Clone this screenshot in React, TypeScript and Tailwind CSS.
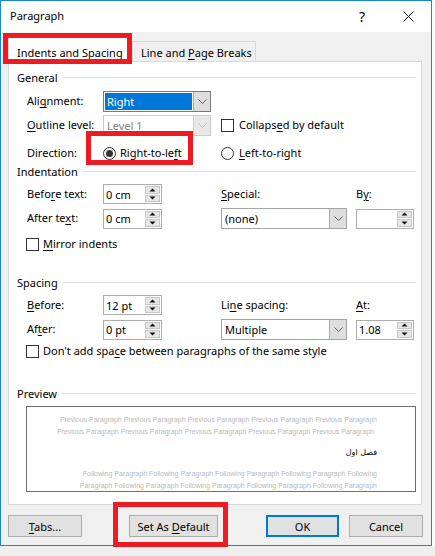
import React from "react";

const U = ({ children }: { children: React.ReactNode }) => (
  <span className="underline decoration-1 underline-offset-2">{children}</span>
);

const Chevron = ({ color = "#5f5f5f" }: { color?: string }) => (
  <svg width="9" height="5" viewBox="0 0 9 5">
    <path d="M0.5 0.5 L4.5 4.5 L8.5 0.5" fill="none" stroke={color} strokeWidth="1" />
  </svg>
);

const Heading = ({ children }: { children: React.ReactNode }) => (
  <div className="flex h-[14px] items-center gap-[5px]">
    <span className="leading-none">{children}</span>
    <div className="h-px flex-1 bg-[#dcdcdc]" />
  </div>
);

const Checkbox = () => <div className="h-[13px] w-[13px] shrink-0 border border-[#333333] bg-white" />;

const Radio = ({ checked }: { checked?: boolean }) => (
  <svg width="13" height="13" viewBox="0 0 13 13" className="shrink-0">
    <circle cx="6.5" cy="6.5" r="6" fill="white" stroke="#333333" strokeWidth="1" />
    {checked && <circle cx="6.5" cy="6.5" r="3.5" fill="#333333" />}
  </svg>
);

const Arrow = ({ up }: { up?: boolean }) => (
  <svg width="7" height="4" viewBox="0 0 7 4">
    <path d={up ? "M0.5 3.5 L3.5 0.5 L6.5 3.5 Z" : "M0.5 0.5 L3.5 3.5 L6.5 0.5 Z"} fill="#111111" />
  </svg>
);

const Spinner = ({ value, width = "w-[59px]" }: { value: string; width?: string }) => (
  <div className={`flex h-[20px] ${width} border border-[#adadad] bg-white`}>
    <div className="flex flex-1 items-center pl-[2px] leading-none">{value}</div>
    <div className="my-[1px] mr-[1px] flex w-[15px] flex-col gap-[1px]">
      <div className="flex flex-1 items-center justify-center border border-[#c7c7c7] bg-[#e6e6e6]">
        <Arrow up />
      </div>
      <div className="flex flex-1 items-center justify-center border border-[#c7c7c7] bg-[#e6e6e6]">
        <Arrow />
      </div>
    </div>
  </div>
);

const Select = ({ value, width }: { value: string; width: string }) => (
  <div className={`flex h-[21px] ${width} border border-[#a5a5a5] bg-white`}>
    <div className="flex flex-1 items-center pl-[3px] leading-none">{value}</div>
    <div className="flex w-[17px] items-center justify-center border-l border-[#acacac] bg-[#dedede]">
      <Chevron />
    </div>
  </div>
);

const Button = ({ children, width, primary }: { children: React.ReactNode; width: string; primary?: boolean }) => (
  <div
    className={`flex h-[22px] ${width} items-center justify-center bg-[#e1e1e1] leading-none ${
      primary ? "border-2 border-[#0078d7]" : "border border-[#adadad]"
    }`}
  >
    {children}
  </div>
);

const grid = "ml-[10px] grid grid-cols-[76px_118px_135px_58px] items-center";

function Panel() {
  return (
    <div className="relative z-0 -mt-px flex w-[414px] flex-col border border-[#d9d9d9] bg-white pb-[12px] pl-[8px] pr-[5px] pt-[8px]">
      <Heading>General</Heading>

      <div className={`${grid} mt-[7px] h-[21px]`}>
        <span>
          Ali<U>g</U>nment:
        </span>
        <div className="flex h-[21px] w-[108px] border border-[#7a7a7a] bg-white">
          <div className="m-[1px] flex flex-1 items-center bg-[#0078d7] pl-[2px] leading-none text-white">Right</div>
          <div className="flex w-[17px] items-center justify-center border-l border-[#acacac] bg-[#dedede]">
            <Chevron />
          </div>
        </div>
        <div />
        <div />
      </div>

      <div className={`${grid} mt-[3px] h-[21px]`}>
        <span>
          <U>O</U>utline level:
        </span>
        <div className="flex h-[21px] w-[108px] border border-[#cccccc] bg-white">
          <div className="flex flex-1 items-center pl-[3px] leading-none text-[#838383]">Level 1</div>
          <div className="flex w-[17px] items-center justify-center border-l border-[#cccccc] bg-[#e8e8e8]">
            <Chevron color="#bdbdbd" />
          </div>
        </div>
        <div className="col-span-2 flex items-center gap-[5px]">
          <Checkbox />
          <span>
            Collaps<U>e</U>d by default
          </span>
        </div>
      </div>

      <div className={`${grid} mt-[7px] h-[20px]`}>
        <span>Direction:</span>
        <div className="flex items-center gap-[4px]">
          <Radio checked />
          <span>
            Right-to-le<U>f</U>t
          </span>
        </div>
        <div className="col-span-2 flex items-center gap-[5px]">
          <Radio />
          <span>
            <U>L</U>eft-to-right
          </span>
        </div>
      </div>

      <div className="mt-[1px]">
        <Heading>Indentation</Heading>
      </div>

      <div className={`${grid} mt-[6px] h-[20px]`}>
        <span>
          Befo<U>r</U>e text:
        </span>
        <Spinner value="0 cm" />
        <span>
          <U>S</U>pecial:
        </span>
        <span>
          B<U>y</U>:
        </span>
      </div>

      <div className={`${grid} mt-[4px] h-[21px]`}>
        <span>
          After te<U>x</U>t:
        </span>
        <Spinner value="0 cm" />
        <Select value="(none)" width="w-[126px]" />
        <Spinner value="" width="w-[58px]" />
      </div>

      <div className="ml-[9px] mt-[8px] flex h-[14px] items-center gap-[4px]">
        <Checkbox />
        <span>
          <U>M</U>irror indents
        </span>
      </div>

      <div className="mt-[24px]">
        <Heading>Spacing</Heading>
      </div>

      <div className={`${grid} mt-[6px] h-[20px]`}>
        <span>
          <U>B</U>efore:
        </span>
        <Spinner value="12 pt" />
        <span>
          Li<U>n</U>e spacing:
        </span>
        <span>
          <U>A</U>t:
        </span>
      </div>

      <div className={`${grid} mt-[4px] h-[21px]`}>
        <span>
          Af<U>t</U>er:
        </span>
        <Spinner value="0 pt" />
        <Select value="Multiple" width="w-[126px]" />
        <Spinner value="1.08" width="w-[58px]" />
      </div>

      <div className="ml-[9px] mt-[4px] flex h-[14px] items-center gap-[4px]">
        <Checkbox />
        <span>
          Don't add spa<U>c</U>e between paragraphs of the same style
        </span>
      </div>

      <div className="mt-[28px]">
        <Heading>Preview</Heading>
      </div>

      <div className="ml-[9px] mt-[6px] h-[86px] overflow-hidden border border-[#6d6d6d] bg-white pr-[38px] pt-[7px] text-right font-['Liberation_Sans',Arial,sans-serif] text-[7px] leading-[12px] text-[#b9b9b9]">
        <div>Previous Paragraph Previous Paragraph Previous Paragraph Previous Paragraph Previous Paragraph</div>
        <div className="pr-[3px]">Previous Paragraph Previous Paragraph Previous Paragraph Previous Paragraph Previous Paragraph</div>
        <div className="mt-[9px] font-['DejaVu_Sans',sans-serif] text-[8px] text-black" dir="rtl">
          فصل اول
        </div>
        <div className="mt-[9px]">Following Paragraph Following Paragraph Following Paragraph Following Paragraph Following</div>
        <div>Paragraph Following Paragraph Following Paragraph Following Paragraph Following Paragraph</div>
      </div>
    </div>
  );
}

function Dialog() {
  return (
    <div className="flex h-[546px] w-[432px] flex-col border border-[#1883d7] bg-[#f0f0f0]">
      {/* title bar */}
      <div className="flex h-[31px] items-center bg-white pl-[9px]">
        <span className="text-[11px]">Paragraph</span>
        <div className="ml-auto flex h-full w-[46px] items-center justify-center text-[14px] leading-none">?</div>
        <div className="flex h-full w-[46px] items-center justify-center">
          <svg width="11" height="11" viewBox="0 0 11 11">
            <path d="M0.5 0.5 L10.5 10.5 M10.5 0.5 L0.5 10.5" stroke="#111111" strokeWidth="1" />
          </svg>
        </div>
      </div>

      <div className="flex flex-col px-[7px]">
        {/* tabs */}
        <div className="flex h-[30px] items-end">
          <div className="relative z-10 flex h-[26px] w-[124px] items-center border-x border-t border-[#d9d9d9] bg-white pl-[8px] pt-[5px] leading-none">
            <span>
              <U>I</U>ndents and Spacing
            </span>
          </div>
          <div className="flex h-[21px] w-[124px] items-center border border-[#d9d9d9] bg-[#f0f0f0] pl-[8px] pt-[1px] leading-none">
            <span>
              Line and <U>P</U>age Breaks
            </span>
          </div>
        </div>

        <Panel />

        {/* footer buttons */}
        <div className="mt-[10px] flex pb-[8px]">
          <Button width="w-[74px]">
            <span>
              <U>T</U>abs...
            </span>
          </Button>
          <div className="ml-[47px]">
            <Button width="w-[89px]">
              <span>
                Set As <U>D</U>efault
              </span>
            </Button>
          </div>
          <div className="ml-[48px]">
            <Button width="w-[73px]" primary>
              OK
            </Button>
          </div>
          <div className="ml-[10px]">
            <Button width="w-[74px]">Cancel</Button>
          </div>
        </div>
      </div>
    </div>
  );
}

export default function App() {
  return (
    <div className="relative flex h-[556px] w-[435px] flex-col overflow-hidden bg-white font-['Noto_Sans',sans-serif] text-[11px] text-black">
      <div className="flex">
        <Dialog />
        <div className="w-[3px]" />
      </div>
      <div className="flex-1 bg-[#efefef]" />

      {/* red callout frames */}
      <div className="absolute left-[3px] top-[33px] z-20 h-[31px] w-[129px] border-[5px] border-[#ed1c24]" />
      <div className="absolute left-[86px] top-[131px] z-20 h-[34px] w-[107px] border-[5px] border-[#ed1c24]" />
      <div className="absolute left-[113px] top-[502px] z-20 h-[45px] w-[115px] border-[5px] border-[#ed1c24]" />
    </div>
  );
}
